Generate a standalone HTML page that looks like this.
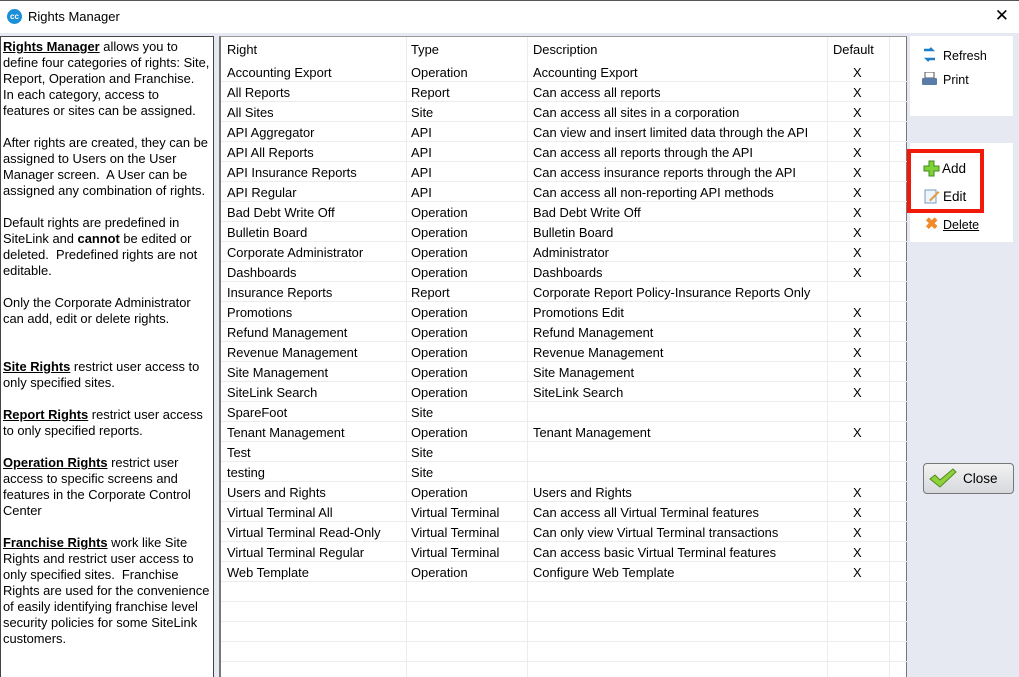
<!DOCTYPE html>
<html><head><style>
*{margin:0;padding:0;box-sizing:border-box}
html,body{width:1019px;height:677px;overflow:hidden}
body{background:#e6e9f1;font-family:"Liberation Sans",Arial,sans-serif;color:#000;position:relative}
.title{position:absolute;left:0;top:0;width:1019px;height:33px;background:#fff;border-top:1px solid #555}
.title .t{position:absolute;left:28px;top:8px;font-size:13px}
.title .x{position:absolute;right:10px;top:5px;font-size:17px}
.logo{position:absolute;left:7px;top:8px;width:15px;height:15px;border-radius:50%;background:#1d8fd8;color:#fff;font-size:8px;font-weight:bold;text-align:center;line-height:15px}
.left{position:absolute;left:0;top:36px;width:214px;height:641px;background:#fff;border:1px solid #444;border-bottom:none;font-size:12.9px;line-height:16px;padding:2px 0 0 2px;white-space:nowrap}
.left b{text-decoration:underline}
.grid{position:absolute;left:219px;top:36px;width:688px;height:641px;background:#fff;border-left:2px solid #777;border-top:1px solid #999;border-right:1px solid #777;font-size:12.9px}
.row{position:absolute;left:0;height:20px;width:686px;border-bottom:1px solid #ececec}
.row span{position:absolute;top:3px;white-space:nowrap}
.c1{left:6px}.c2{left:190px}.c3{left:312px}.c4{left:632px}
.vl{position:absolute;top:0;bottom:0;width:1px;background:#ececec}
.hd span{top:5px}
.box{position:absolute;background:#fff}
.btn{position:absolute;font-size:12.5px}
</style></head><body>
<div class="title"><div class="logo">cc</div><div class="t">Rights Manager</div><div class="x">✕</div></div>
<div class="left">
<b>Rights Manager</b> allows you to<br>define four categories of rights: Site,<br>Report, Operation and Franchise.<br>In each category, access to<br>features or sites can be assigned.<br><br>
After rights are created, they can be<br>assigned to Users on the User<br>Manager screen.&nbsp; A User can be<br>assigned any combination of rights.<br><br>
Default rights are predefined in<br>SiteLink and <strong>cannot</strong> be edited or<br>deleted.&nbsp; Predefined rights are not<br>editable.<br><br>
Only the Corporate Administrator<br>can add, edit or delete rights.<br><br><br>
<b>Site Rights</b> restrict user access to<br>only specified sites.<br><br>
<b>Report Rights</b> restrict user access<br>to only specified reports.<br><br>
<b>Operation Rights</b> restrict user<br>access to specific screens and<br>features in the Corporate Control<br>Center<br><br>
<b>Franchise Rights</b> work like Site<br>Rights and restrict user access to<br>only specified sites.&nbsp; Franchise<br>Rights are used for the convenience<br>of easily identifying franchise level<br>security policies for some SiteLink<br>customers.
</div>
<div class="grid">
<div class="vl" style="left:185px"></div><div class="vl" style="left:306px"></div><div class="vl" style="left:606px"></div><div class="vl" style="left:668px"></div>
<div class="row hd" style="top:0;height:24px;border:none;background:transparent"><span class="c1">Right</span><span class="c2">Type</span><span class="c3">Description</span><span style="left:612px">Default</span></div>
<div id="rows"></div>
</div>
<div class="box" style="left:910px;top:36px;width:103px;height:80px"></div>
<div class="box" style="left:910px;top:143px;width:103px;height:99px"></div>
<div class="btn" style="left:921px;top:47px"><svg width="17" height="16" viewBox="0 0 17 16"><path d="M3 3h8l-2-2M14 12H6l2 2" stroke="#1c7fc8" stroke-width="2.5" fill="none"/></svg></div>
<div class="btn" style="left:943px;top:49px">Refresh</div>
<div class="btn" style="left:921px;top:72px"><svg width="17" height="15"><rect x="4" y="0" width="9" height="6" fill="#fff" stroke="#555"/><rect x="1" y="6" width="15" height="7" rx="1" fill="#5a7ca8"/></svg></div>
<div class="btn" style="left:943px;top:73px">Print</div>
<div style="position:absolute;left:907px;top:149px;width:77px;height:64px;border:4px solid #f0190a;background:#fff"></div>
<div class="btn" style="left:923px;top:160px"><svg width="17" height="17"><path d="M6 1h5v5h5v5h-5v5H6v-5H1V6h5z" fill="#7fd13a" stroke="#3f8a1a"/></svg></div>
<div class="btn" style="left:942px;top:161px;font-size:13.5px">Add</div>
<div class="btn" style="left:924px;top:188px"><svg width="16" height="16"><rect x="1" y="2" width="11" height="13" fill="#eef4fb" stroke="#7a9bc2"/><path d="M5 12l9-9 1.5 1.5-9 9z" fill="#e0a040"/></svg></div>
<div class="btn" style="left:943px;top:189px;font-size:13.5px">Edit</div>
<div class="btn" style="left:925px;top:217px;color:#f08a2a;font-size:16px;font-weight:bold;line-height:16px">✖</div>
<div class="btn" style="left:943px;top:218px;text-decoration:underline">Delete</div>
<div style="position:absolute;left:923px;top:463px;width:91px;height:31px;border:1px solid #777;border-radius:4px;background:linear-gradient(#f2f2f2,#d6d8dc)"></div>
<div class="btn" style="left:928px;top:467px"><svg width="30" height="22"><path d="M2 12l5-4 5 5 13-11 3 3-16 15z" fill="#8fd13a" stroke="#4f8a1a"/></svg></div>
<div class="btn" style="left:963px;top:471px;font-size:13.5px">Close</div>
<script>
var d=[["Accounting Export","Operation","Accounting Export",1],["All Reports","Report","Can access all reports",1],["All Sites","Site","Can access all sites in a corporation",1],["API Aggregator","API","Can view and insert limited data through the API",1],["API All Reports","API","Can access all reports through the API",1],["API Insurance Reports","API","Can access insurance reports through the API",1],["API Regular","API","Can access all non-reporting API methods",1],["Bad Debt Write Off","Operation","Bad Debt Write Off",1],["Bulletin Board","Operation","Bulletin Board",1],["Corporate Administrator","Operation","Administrator",1],["Dashboards","Operation","Dashboards",1],["Insurance Reports","Report","Corporate Report Policy-Insurance Reports Only",0],["Promotions","Operation","Promotions Edit",1],["Refund Management","Operation","Refund Management",1],["Revenue Management","Operation","Revenue Management",1],["Site Management","Operation","Site Management",1],["SiteLink Search","Operation","SiteLink Search",1],["SpareFoot","Site","",0],["Tenant Management","Operation","Tenant Management",1],["Test","Site","",0],["testing","Site","",0],["Users and Rights","Operation","Users and Rights",1],["Virtual Terminal All","Virtual Terminal","Can access all Virtual Terminal features",1],["Virtual Terminal Read-Only","Virtual Terminal","Can only view Virtual Terminal transactions",1],["Virtual Terminal Regular","Virtual Terminal","Can access basic Virtual Terminal features",1],["Web Template","Operation","Configure Web Template",1]];
var h="";for(var i=0;i<31;i++){var r=d[i]||["","","",0];h+='<div class="row" style="top:'+(25+i*20)+'px"><span class="c1">'+r[0]+'</span><span class="c2">'+r[1]+'</span><span class="c3">'+r[2]+'</span><span class="c4">'+(r[3]?"X":"")+'</span></div>';}
document.getElementById("rows").innerHTML=h;
</script>
</body></html>
